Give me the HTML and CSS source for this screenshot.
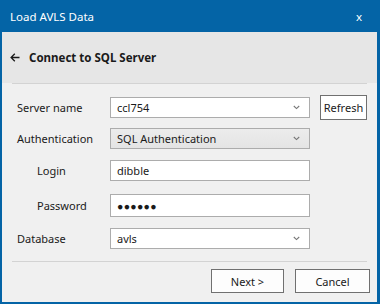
FILE: index.html
```html
<!DOCTYPE html>
<html>
<head>
<meta charset="utf-8">
<link rel="stylesheet" href="styles.css">
</head>
<body>
<div class="window">
  <div class="titlebar">
    <span class="title">Load AVLS Data</span>
    <span class="close">x</span>
  </div>
  <div class="content">
    <div class="header">
      <svg class="back" width="10" height="9" viewBox="0 0 10 9"><path d="M9.5 4.5H1.2M4.8 0.8L1.1 4.5L4.8 8.2" fill="none" stroke="#1a1a1a" stroke-width="1.3"/></svg>
      <span class="heading">Connect to SQL Server</span>
    </div>
    <div class="sep"></div>
    <div class="form">
      <div class="row r1">
        <span class="label">Server name</span>
        <div class="field combo"><span>ccl754</span><svg class="chev" width="7" height="5" viewBox="0 0 7 5"><path d="M0.8 1L3.5 3.6L6.2 1" fill="none" stroke="#777" stroke-width="1.1"/></svg></div>
        <div class="btn refresh">Refresh</div>
      </div>
      <div class="row r2">
        <span class="label">Authentication</span>
        <div class="field combo gray"><span>SQL Authentication</span><svg class="chev" width="7" height="5" viewBox="0 0 7 5"><path d="M0.8 1L3.5 3.6L6.2 1" fill="none" stroke="#777" stroke-width="1.1"/></svg></div>
      </div>
      <div class="row r3">
        <span class="label indent">Login</span>
        <div class="field"><span>dibble</span></div>
      </div>
      <div class="row r4">
        <span class="label indent">Password</span>
        <div class="field pw"><span class="dots">●●●●●●</span></div>
      </div>
      <div class="row r5">
        <span class="label">Database</span>
        <div class="field combo"><span>avls</span><svg class="chev" width="7" height="5" viewBox="0 0 7 5"><path d="M0.8 1L3.5 3.6L6.2 1" fill="none" stroke="#777" stroke-width="1.1"/></svg></div>
      </div>
    </div>
    <div class="sep"></div>
    <div class="footer">
      <div class="btn next">Next &gt;</div>
      <div class="btn cancel">Cancel</div>
    </div>
  </div>
</div>
</body>
</html>
```

FILE: styles.css
```css
* { box-sizing: border-box; }
html, body { margin: 0; padding: 0; }
body {
  width: 380px;
  height: 304px;
  font-family: "Noto Sans", "Open Sans", sans-serif;
  font-size: 11px;
  color: #1a1a1a;
  overflow: hidden;
}
.window {
  width: 380px;
  height: 304px;
  background: #0464a6;
  padding: 0 3px 2px 2px;
  display: flex;
  flex-direction: column;
}
.titlebar {
  height: 32px;
  flex: none;
  display: flex;
  align-items: center;
  justify-content: space-between;
  color: #fff;
  padding: 0 15px 0 8px;
}
.title { font-size: 11.5px; }
.close { font-size: 11.5px; }
.content {
  flex: 1;
  background: #f0f0f0;
  display: flex;
  flex-direction: column;
}
.header {
  height: 51px;
  background: #e6e6e6;
  display: flex;
  align-items: center;
  padding-left: 8px;
  gap: 9px;
}
.heading { font-weight: bold; font-size: 11.5px; }
.sep {
  height: 1px;
  background: #d3d3d3;
  margin: 0 10px;
  flex: none;
}
.form {
  height: 177px;
  padding: 13px 0 0 15px;
  display: flex;
  flex-direction: column;
}
.row {
  display: flex;
  align-items: center;
}
.r2 { margin-top: 10px; }
.r3 { margin-top: 11px; }
.r4 { margin-top: 13px; }
.r5 { margin-top: 11px; }
.label { width: 93px; flex: none; }
.label.indent { padding-left: 20px; }
.field {
  width: 200px;
  height: 21px;
  border: 1px solid #acacac;
  background: #fff;
  display: flex;
  align-items: center;
  justify-content: space-between;
  padding: 0 9px 0 6px;
}
.field.pw { height: 23px; }
.field.gray { background: linear-gradient(#ececec, #e4e4e4); }
.dots { font-size: 10.5px; letter-spacing: 0.3px; }
.chev { flex: none; }
.btn {
  border: 1px solid #707070;
  background: #fdfdfd;
  display: flex;
  align-items: center;
  justify-content: center;
}
.refresh {
  margin: -2px 0 -2px 10px;
  width: 47px;
  height: 25px;
  background: #fff;
}
.footer {
  display: flex;
  justify-content: flex-end;
  gap: 11px;
  padding: 7px 7px 0 0;
}
.next, .cancel { height: 24px; }
.next { width: 73px; }
.cancel { width: 75px; }
```
